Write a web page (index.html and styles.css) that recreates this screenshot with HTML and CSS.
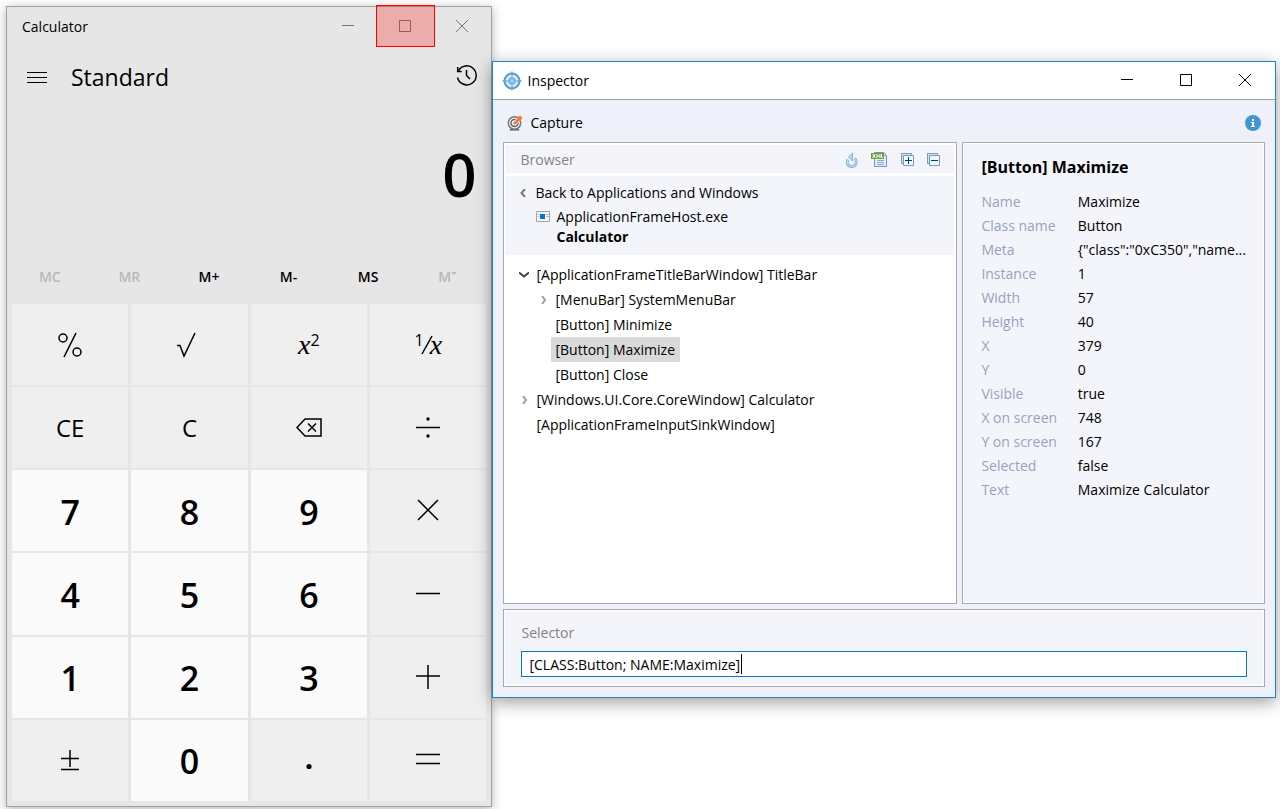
FILE: index.html
```html
<!doctype html>
<html lang="en">
  <head>
    <meta charset="UTF-8" />
    <meta name="viewport" content="width=device-width, initial-scale=1.0" />
    <title>Inspector</title>
    <link rel="stylesheet" href="styles.css" />
  </head>
  <body>
    <main class="desktop">
      <section class="calculator">
        <header class="calc-titlebar">
          <span class="calc-title">Calculator</span>
          <button class="win-btn" type="button" aria-label="Minimize Calculator">
            <svg width="12" height="12" viewBox="0 0 12 12"><path d="M0 5.5h12" /></svg>
          </button>
          <button class="win-btn captured" type="button" aria-label="Maximize Calculator">
            <svg width="12" height="12" viewBox="0 0 12 12"><path d="M.5.5h11v11H.5z" /></svg>
          </button>
          <button class="win-btn" type="button" aria-label="Close Calculator">
            <svg width="12" height="12" viewBox="0 0 12 12"><path d="M0 0l12 12M12 0L0 12" /></svg>
          </button>
        </header>

        <div class="calc-header">
          <button class="icon-btn" type="button" aria-label="Menu">
            <svg width="20" height="12" viewBox="0 0 20 12"><path d="M0 1.5h20M0 6.5h20M0 11.5h20" /></svg>
          </button>
          <h1>Standard</h1>
          <button class="icon-btn" type="button" aria-label="History">
            <svg class="history" width="22" height="22" viewBox="0 0 22 22">
              <path d="M1.5 13.5a9.5 9.5 0 1 0 .8-6.5" />
              <path d="M1.7 3v4.5h4M10.5 6v5.5l3.5 3.5" />
            </svg>
          </button>
        </div>

        <output class="display">0</output>

        <div class="memory">
          <button type="button" disabled>MC</button>
          <button type="button" disabled>MR</button>
          <button type="button">M+</button>
          <button type="button">M-</button>
          <button type="button">MS</button>
          <button class="memory-list" type="button" disabled>
            M<svg width="6" height="3" viewBox="0 0 6 3"><path d="M0 0h6L3 3z" /></svg>
          </button>
        </div>

        <div class="keypad">
          <button class="key" type="button" aria-label="Percent">
            <svg width="26" height="26" viewBox="0 0 26 26">
              <circle cx="6" cy="6" r="4" /><circle cx="20" cy="20" r="4" /><path d="M19 1L7 25" />
            </svg>
          </button>
          <button class="key" type="button" aria-label="Square root">
            <svg width="26" height="26" viewBox="0 0 26 26"><path d="M0 13.5h3L7 24 18 1" /></svg>
          </button>
          <button class="key math" type="button"><i>x</i><sup>2</sup></button>
          <button class="key math" type="button">
            <sup>1</sup>
            <svg class="fraction" width="12" height="20" viewBox="0 0 12 20"><path d="M1 19L11 1" /></svg>
            <i>x</i>
          </button>

          <button class="key" type="button">CE</button>
          <button class="key" type="button">C</button>
          <button class="key" type="button" aria-label="Backspace">
            <svg width="26" height="20" viewBox="0 0 26 20">
              <path d="M9 1h16v17H9L1 9.5zM12 5.5l8 8M20 5.5l-8 8" />
            </svg>
          </button>
          <button class="key" type="button" aria-label="Divide">
            <svg width="24" height="24" viewBox="0 0 24 24">
              <path d="M0 11.500h24" /><circle class="dot" cx="12" cy="3" r="1.700" /><circle class="dot" cx="12" cy="20" r="1.700" />
            </svg>
          </button>

          <button class="key number" type="button">7</button>
          <button class="key number" type="button">8</button>
          <button class="key number" type="button">9</button>
          <button class="key" type="button" aria-label="Multiply">
            <svg width="24" height="24" viewBox="0 0 24 24"><path d="M2 1l20 20M22 1L2 21" /></svg>
          </button>

          <button class="key number" type="button">4</button>
          <button class="key number" type="button">5</button>
          <button class="key number" type="button">6</button>
          <button class="key" type="button" aria-label="Minus">
            <svg width="24" height="24" viewBox="0 0 24 24"><path d="M0 11.500h24" /></svg>
          </button>

          <button class="key number" type="button">1</button>
          <button class="key number" type="button">2</button>
          <button class="key number" type="button">3</button>
          <button class="key" type="button" aria-label="Plus">
            <svg width="24" height="24" viewBox="0 0 24 24"><path d="M0 11h24M12 0v24" /></svg>
          </button>

          <button class="key" type="button" aria-label="Positive negative">
            <svg width="18" height="22" viewBox="0 0 18 22"><path d="M0 9.500h18M9 1v17M0 20.500h18" /></svg>
          </button>
          <button class="key number" type="button">0</button>
          <button class="key" type="button" aria-label="Decimal separator">
            <svg width="24" height="24" viewBox="0 0 24 24"><circle class="dot" cx="12" cy="18.500" r="2.600" /></svg>
          </button>
          <button class="key" type="button" aria-label="Equals">
            <svg width="24" height="24" viewBox="0 0 24 24"><path d="M0 6.500h24M0 15.500h24" /></svg>
          </button>
        </div>
      </section>

      <section class="inspector">
        <header class="insp-titlebar">
          <svg class="app-icon" width="20" height="20" viewBox="0 0 20 20">
            <circle cx="10" cy="10" r="7.500" fill="#d4ebf8" stroke="#5b9bc8" stroke-width="2" />
            <circle cx="10" cy="10" r="3.500" fill="#72b2dc" stroke="#7db4d8" />
            <path d="M10 .5v5M10 14.500v5M.5 10h5M14.500 10h5" stroke="#6fa9d0" stroke-width="1.500" />
            <path d="M10 8v4M8 10h4" stroke="#b4dcf3" />
          </svg>
          <span class="insp-title">Inspector</span>
          <button class="win-btn" type="button" aria-label="Minimize">
            <svg width="12" height="12" viewBox="0 0 12 12"><path d="M0 5.500h12" /></svg>
          </button>
          <button class="win-btn" type="button" aria-label="Maximize">
            <svg width="12" height="12" viewBox="0 0 12 12"><path d="M.5.5h11v11H.5z" /></svg>
          </button>
          <button class="win-btn" type="button" aria-label="Close">
            <svg width="12" height="12" viewBox="0 0 12 12"><path d="M0 0l12 12M12 0L0 12" /></svg>
          </button>
        </header>

        <div class="toolbar">
          <button class="capture" type="button">
            <svg width="16" height="16" viewBox="0 0 16 16" fill="none">
              <path d="M4 13l-1.500 2.500h10L11 13" fill="#555" />
              <circle cx="7.500" cy="8" r="6.200" fill="#f4f4f4" stroke="#777" stroke-width="1.500" />
              <circle cx="7.500" cy="8" r="3.500" stroke="#666" stroke-width="1.500" />
              <path d="M7 9l5-5" stroke="#eef1fa" stroke-width="4" />
              <path d="M7 9l4.500-4.500" stroke="#ff7338" stroke-width="2.500" />
              <path d="M10 6V3l3.500-3 .5 2 2 .5L13 6z" fill="#ff7338" />
            </svg>
            Capture
          </button>
          <button class="icon-btn" type="button" aria-label="Info">
            <svg width="16" height="16" viewBox="0 0 16 16">
              <circle cx="8" cy="8" r="8" fill="#4593d3" />
              <path d="M7 4h2v2H7zM6 7h3v4h1v1H6v-1h1V8H6z" fill="#fff" />
            </svg>
          </button>
        </div>

        <div class="panels">
          <div class="browser">
            <div class="browser-head">
              <h2>Browser</h2>
              <button class="icon-btn" type="button" aria-label="Refresh">
                <svg width="12" height="16" viewBox="0 0 12 16" fill="none">
                  <path d="M2 7.500a4.500 4.500 0 1 0 6.500-1" stroke="#83b7d8" stroke-width="3" />
                  <path d="M2 7.500a4.500 4.500 0 1 0 6.500-1" stroke="#cde7f5" />
                  <path d="M6.500 1v8L2.500 5z" fill="#b8dcf0" stroke="#83b7d8" />
                </svg>
              </button>
              <button class="icon-btn" type="button" aria-label="Export XML">
                <svg width="17" height="17" viewBox="0 0 17 17">
                  <path d="M3.500 1.500h9l3 3v11h-12z" fill="#e7effb" stroke="#7890c4" />
                  <path d="M12.500 1.500v3h3M6 9.500h7M6 11.500h7M6 13.500h7" fill="none" stroke="#8aa5d6" />
                  <path d="M0 2h13v6H0z" fill="#6da336" />
                  <path d="M1.500 3l3 4M4.500 3l-3 4M6 7V3.500l1.500 2L9 3.500V7M10.500 3v3.500H12" fill="none" stroke="#fff" />
                </svg>
              </button>
              <button class="icon-btn" type="button" aria-label="Expand all">
                <svg width="13" height="13" viewBox="0 0 13 13">
                  <path d="M.5.5h10v10H.5z" fill="#c7e5f5" stroke="#8097b5" />
                  <path d="M2.500 2.500h10v10h-10z" fill="#edf8fd" stroke="#8097b5" />
                  <path d="M4 7.500h7M7.500 4v7" stroke="#003f7d" />
                </svg>
              </button>
              <button class="icon-btn" type="button" aria-label="Collapse all">
                <svg width="13" height="13" viewBox="0 0 13 13">
                  <path d="M.5.5h10v10H.5z" fill="#c7e5f5" stroke="#8097b5" />
                  <path d="M2.500 2.500h10v10h-10z" fill="#edf8fd" stroke="#8097b5" />
                  <path d="M4 7.500h7" stroke="#003f7d" />
                </svg>
              </button>
            </div>

            <div class="browser-path">
              <a class="back" href="#">
                <svg class="chevron" width="6" height="8" viewBox="0 0 6 8"><path d="M5 0L1.500 4 5 8" /></svg>
                Back to Applications and Windows
              </a>
              <div class="process">
                <svg width="14" height="12" viewBox="0 0 14 12">
                  <path d="M.5.5h13v10H.5z" fill="#f8f8f8" stroke="#a5a5a5" />
                  <path d="M1.500 3.500h2M1.500 5.500h2M10 3.500h3M10 5.500h3" stroke="#bbb" />
                  <path d="M4 3h5v5H4z" fill="#0078d7" />
                </svg>
                <div>
                  <p>ApplicationFrameHost.exe</p>
                  <p><strong>Calculator</strong></p>
                </div>
              </div>
            </div>

            <ul class="tree">
              <li>
                <div class="node">
                  <svg class="chevron open" width="10" height="6" viewBox="0 0 10 6"><path d="M0 .5l5 4 5-4" /></svg>
                  <span>[ApplicationFrameTitleBarWindow] TitleBar</span>
                </div>
                <ul>
                  <li class="node">
                    <svg class="chevron" width="10" height="8" viewBox="0 0 10 8"><path d="M4 0l3 4-3 4" /></svg>
                    <span>[MenuBar] SystemMenuBar</span>
                  </li>
                  <li class="node leaf"><span>[Button] Minimize</span></li>
                  <li class="node leaf"><span class="selected">[Button] Maximize</span></li>
                  <li class="node leaf"><span>[Button] Close</span></li>
                </ul>
              </li>
              <li class="node">
                <svg class="chevron" width="10" height="8" viewBox="0 0 10 8"><path d="M4 0l3 4-3 4" /></svg>
                <span>[Windows.UI.Core.CoreWindow] Calculator</span>
              </li>
              <li class="node leaf"><span>[ApplicationFrameInputSinkWindow]</span></li>
            </ul>
          </div>

          <div class="details">
            <h2>[Button] Maximize</h2>
            <table>
              <tr><th scope="row">Name</th><td>Maximize</td></tr>
              <tr><th scope="row">Class name</th><td>Button</td></tr>
              <tr><th scope="row">Meta</th><td>{"class":"0xC350","name...</td></tr>
              <tr><th scope="row">Instance</th><td>1</td></tr>
              <tr><th scope="row">Width</th><td>57</td></tr>
              <tr><th scope="row">Height</th><td>40</td></tr>
              <tr><th scope="row">X</th><td>379</td></tr>
              <tr><th scope="row">Y</th><td>0</td></tr>
              <tr><th scope="row">Visible</th><td>true</td></tr>
              <tr><th scope="row">X on screen</th><td>748</td></tr>
              <tr><th scope="row">Y on screen</th><td>167</td></tr>
              <tr><th scope="row">Selected</th><td>false</td></tr>
              <tr><th scope="row">Text</th><td>Maximize Calculator</td></tr>
            </table>
          </div>
        </div>

        <div class="selector">
          <label for="selector">Selector</label>
          <div class="selector-field">
            <input type="text" id="selector" value="[CLASS:Button; NAME:Maximize]" spellcheck="false" />
            <span class="caret"></span>
          </div>
        </div>
      </section>
    </main>
  </body>
</html>
```
FILE: styles.css
```css
* {
  margin: 0;
  padding: 0;
  box-sizing: border-box;
}

body {
  font-family: "Open Sans", "Segoe UI", "Noto Sans", sans-serif;
  font-size: 14px;
  line-height: 24px;
  color: #000;
  background: #fff;
}

button,
input {
  font: inherit;
  color: inherit;
}

button {
  border: none;
  background: none;
}

ul {
  list-style: none;
}

svg {
  display: block;
  flex-shrink: 0;
}

.desktop {
  display: flex;
  align-items: flex-start;
  min-height: 100vh;
  padding: 6px 4px 2px 6px;
}

/* window buttons */
.win-btn {
  display: flex;
  align-items: center;
  justify-content: center;
}

.win-btn svg {
  fill: none;
  stroke: currentColor;
}

.icon-btn {
  display: flex;
}

/* calculator */
.calculator {
  flex: 486 1 0;
  align-self: stretch;
  display: flex;
  flex-direction: column;
  background: #e6e6e6;
  border: 1px solid #a0a0a0;
  box-shadow: 0 2px 10px rgba(0, 0, 0, 0.3);
}

.calc-titlebar {
  display: flex;
  height: 40px;
}

.calc-title {
  flex: 1;
  padding-left: 15px;
  line-height: 40px;
}

.calc-titlebar .win-btn {
  position: relative;
  width: 57px;
  padding: 0 2px 2px 0;
  color: #777;
}

.captured::after {
  content: "";
  position: absolute;
  inset: -2px -1px 0;
  background: rgba(255, 0, 0, 0.25);
  border: 1px solid #f00;
}

.calc-header {
  display: flex;
  align-items: center;
  height: 60px;
  padding: 0 13px 0 20px;
}

.calc-header h1 {
  flex: 1;
  padding-left: 24px;
  font-size: 23px;
  font-weight: 400;
}

.calc-header svg {
  fill: none;
  stroke: #000;
}

.calc-header .history {
  stroke-width: 1.5;
  margin-bottom: 4px;
}

.display {
  height: 143px;
  padding-right: 15px;
  font-size: 60px;
  font-weight: 600;
  line-height: 134px;
  text-align: right;
}

.memory {
  display: grid;
  grid-template-columns: repeat(6, 1fr);
  height: 54px;
  padding: 0 4px 0 3px;
}

.memory button {
  font-weight: 600;
}

.memory button:disabled {
  color: #b9b9b9;
}

.memory .memory-list {
  display: flex;
  align-items: center;
  justify-content: center;
}

.memory-list svg {
  margin-bottom: 8px;
  fill: #b9b9b9;
}

.keypad {
  flex: 1;
  display: grid;
  grid-template-columns: repeat(4, 1fr);
  grid-auto-rows: 1fr;
  gap: 2px 3px;
  padding: 0 5px 5px;
}

.key {
  display: flex;
  align-items: center;
  justify-content: center;
  background: #efefef;
  font-size: 24px;
}

.key svg {
  fill: none;
  stroke: #000;
  stroke-width: 1.5;
}

.key .dot {
  fill: #000;
  stroke: none;
}

.key.number {
  padding-top: 2px;
  background: #fafafa;
  font-size: 34px;
  font-weight: 600;
}

.math i {
  font-family: "Liberation Serif", "Times New Roman", serif;
  font-size: 28px;
}

.math sup {
  padding-bottom: 10px;
  font-size: 16px;
  line-height: 16px;
}

.math .fraction {
  margin: 0 -3px;
}

/* inspector */
.inspector {
  position: relative;
  flex: 784 1 0;
  margin-top: 55px;
  background: #eef1fa;
  border: 1px solid #1883d7;
  box-shadow: 0 4px 16px rgba(0, 0, 0, 0.4);
}

.insp-titlebar {
  display: flex;
  align-items: center;
  height: 38px;
  padding-left: 9px;
  background: #fff;
  border-bottom: 1px solid #a0a0a0;
}

.insp-titlebar .app-icon {
  fill: none;
}

.insp-title {
  flex: 1;
  padding-left: 5px;
}

.insp-titlebar .win-btn {
  width: 59px;
  height: 37px;
  padding: 0 2px 2px 0;
}

.toolbar {
  display: flex;
  align-items: center;
  justify-content: space-between;
  height: 42px;
  padding: 3px 14px 0;
}

.capture {
  display: flex;
  align-items: center;
  gap: 7px;
}

.panels {
  display: grid;
  grid-template-columns: 3fr 2fr;
  gap: 5px;
  min-height: 462px;
  padding: 0 10px;
}

.browser,
.details,
.selector {
  border: 1px solid #a9a9af;
}

.browser {
  padding: 2px;
  background: #fff;
}

.browser-head {
  display: flex;
  align-items: center;
  gap: 13px;
  height: 28px;
  padding: 1px 14px 0;
  background: #f4f5fb;
}

.browser-head h2 {
  flex: 1;
  font-size: 14px;
  font-weight: 400;
  color: #838383;
}

.browser-path {
  margin-top: 3px;
  padding: 5px 14px 8px;
  background: #f4f5fb;
}

.chevron {
  fill: none;
  stroke: #a0a0a0;
  stroke-width: 2;
}

.chevron.open {
  stroke: #404040;
}

.back {
  display: flex;
  align-items: center;
  gap: 9px;
  color: #000;
  text-decoration: none;
}

.back .chevron {
  stroke: #777;
}

.process {
  display: flex;
  gap: 6px;
  padding: 2px 0 0 16px;
  line-height: 20px;
}

.process svg {
  margin-top: 4px;
}

.tree {
  padding: 7px 0 0 13px;
}

.tree ul {
  padding-left: 19px;
}

.node {
  display: flex;
  align-items: center;
  gap: 3px;
  line-height: 25px;
}

.node span {
  padding: 0 5px 0 4px;
}

.node.leaf {
  padding-left: 13px;
}

.node .selected {
  background: #d9d9d9;
}

.details,
.selector {
  background: #f4f5fb;
  box-shadow: inset 0 0 0 1px #fff;
}

.details {
  padding: 12px 18px;
}

.details h2 {
  margin-bottom: 11px;
  font-size: 16px;
  font-weight: 700;
}

.details table {
  border-collapse: collapse;
}

.details th {
  width: 97px;
  font-weight: 400;
  text-align: left;
  color: #98a3bb;
}

.details td {
  white-space: nowrap;
}

.selector {
  margin: 5px 10px 10px;
  padding: 11px 17px 9px;
}

.selector label {
  display: block;
  margin-bottom: 6px;
  color: #838383;
}

.selector-field {
  position: relative;
}

.selector input {
  display: block;
  width: 100%;
  height: 26px;
  padding: 0 7px;
  background: #fff;
  border: 1px solid #0078d7;
  outline: none;
}

.caret {
  position: absolute;
  top: 3px;
  left: 220px;
  width: 1px;
  height: 20px;
  background: #000;
}
```
